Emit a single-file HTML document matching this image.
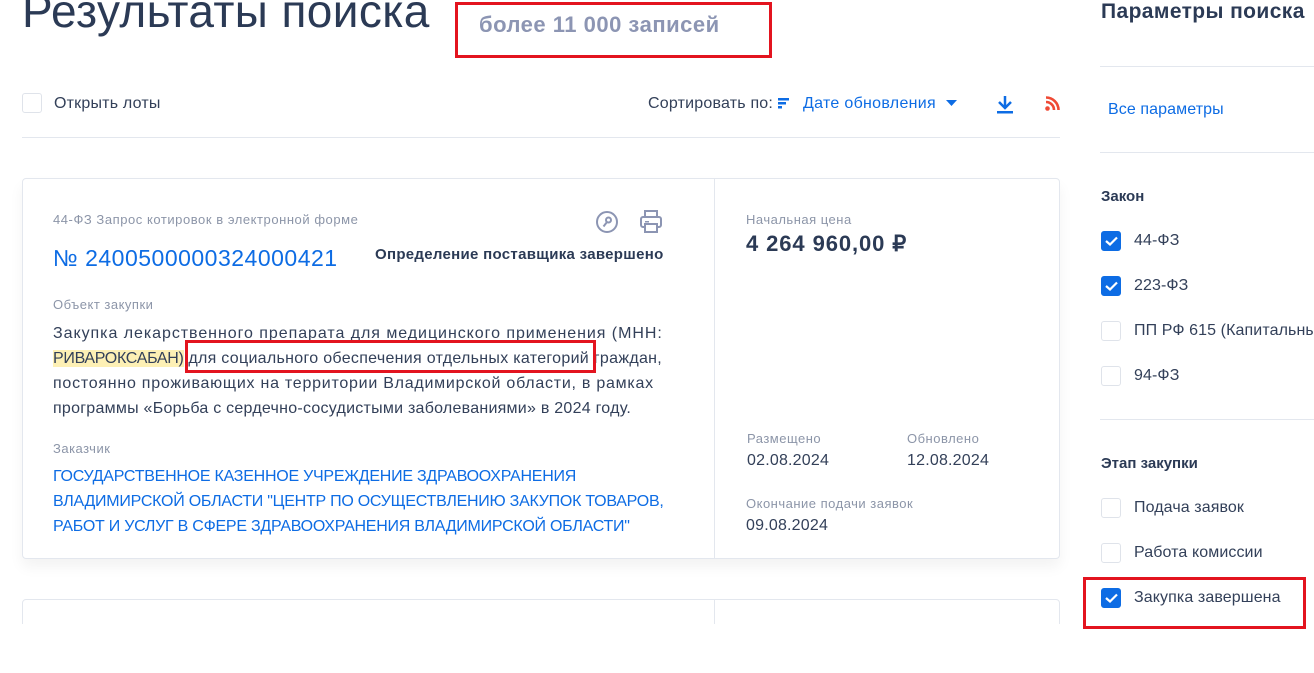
<!DOCTYPE html>
<html><head><meta charset="utf-8"><style>
*{margin:0;padding:0;box-sizing:border-box}
body{width:1314px;height:673px;overflow:hidden;background:#fff;font-family:"Liberation Sans",sans-serif;color:#334059;position:relative}
.a{position:absolute;white-space:nowrap}
.cb{position:absolute;width:20px;height:20px;border:1px solid #dfe3ea;border-radius:3px;background:#fff}
.cb.on{background:#0d6ce4;border-color:#0d6ce4}
.cb.on svg{position:absolute;left:3px;top:4px}
.red{position:absolute;border:3px solid #e3141f}
.lbl{font-size:13px;color:#8c95a8;letter-spacing:0.2px}
.t16{font-size:16px;letter-spacing:0.2px}
.body{font-size:16px;line-height:25px}
.hr{position:absolute;height:1px;background:#e3e7ee}
.s{font-size:16px;letter-spacing:0.1px}
</style></head><body>
<div class="a" style="left:22px;top:-16px;font-size:46px;color:#2b3a55;letter-spacing:0.4px">Результаты поиска</div>
<div class="a" style="left:479px;top:12px;font-size:22px;font-weight:bold;color:#8c95b3;letter-spacing:0.5px">более 11 000 записей</div>
<div class="red" style="left:455px;top:2px;width:317px;height:56px"></div>

<div class="cb" style="left:22px;top:93px"></div>
<div class="a t16" style="left:54px;top:95px;color:#334059">Открыть лоты</div>
<div class="a t16" style="left:648px;top:95px;color:#334059">Сортировать по:</div>
<svg class="a" style="left:778px;top:98px" width="12" height="11"><rect x="0" y="0" width="11" height="2.5" fill="#0d6ce4"/><rect x="0" y="4" width="8" height="2.5" fill="#0d6ce4"/><rect x="0" y="8" width="4" height="2.5" fill="#0d6ce4"/></svg>
<div class="a t16" style="left:803px;top:95px;color:#0d6ce4;letter-spacing:0.3px">Дате обновления</div>
<svg class="a" style="left:946px;top:100px" width="11" height="7"><path d="M0 0H11L5.5 6Z" fill="#0d6ce4"/></svg>
<svg class="a" style="left:996px;top:95px" width="18" height="19"><path d="M9 1V13M3 7L9 13L15 7" stroke="#0d6ce4" stroke-width="2.5" fill="none"/><rect x="1" y="16" width="16" height="2.5" fill="#0d6ce4"/></svg>
<svg class="a" style="left:1045px;top:96px" width="15" height="15"><circle cx="2.5" cy="12.5" r="2.3" fill="#ef4a35"/><path d="M1 6A8 8 0 0 1 9 14M1 1.5A12.5 12.5 0 0 1 13.5 14" stroke="#ef4a35" stroke-width="2.6" fill="none"/></svg>
<div class="hr" style="left:22px;top:137px;width:1038px"></div>

<div style="position:absolute;left:22px;top:178px;width:1038px;height:381px;border:1px solid #e3e7ee;border-radius:4px;box-shadow:0 8px 14px rgba(0,0,0,0.05)"></div>
<div style="position:absolute;left:714px;top:179px;width:1px;height:379px;background:#e3e7ee"></div>
<div class="a lbl" style="left:53px;top:212px;letter-spacing:0.55px">44-ФЗ Запрос котировок в электронной форме</div>
<svg class="a" style="left:595px;top:210px" width="24" height="24"><circle cx="12" cy="12" r="10" stroke="#8c95b3" stroke-width="2" fill="none"/><circle cx="13.5" cy="10" r="2.5" stroke="#8c95b3" stroke-width="2" fill="none"/><path d="M12 12L8.5 16.5" stroke="#8c95b3" stroke-width="2"/></svg>
<svg class="a" style="left:640px;top:210px" width="22" height="24"><rect x="5" y="1" width="12" height="6" stroke="#8c95b3" stroke-width="2" fill="none"/><rect x="1" y="7" width="20" height="10" rx="2" stroke="#8c95b3" stroke-width="2" fill="none"/><rect x="5" y="14" width="12" height="8" stroke="#8c95b3" stroke-width="2" fill="#fff"/><rect x="5" y="11" width="4" height="1.5" fill="#8c95b3"/></svg>
<div class="a" style="left:53px;top:245px;font-size:23px;color:#0d6ce4;font-weight:500;letter-spacing:0.5px">№ 2400500000324000421</div>
<div class="a" style="left:375px;top:246px;font-size:15px;font-weight:bold;color:#2b3a55;letter-spacing:0.3px">Определение поставщика завершено</div>
<div class="a lbl" style="left:53px;top:297px;letter-spacing:0.5px">Объект закупки</div>
<div class="a body" style="left:53px;top:321px;letter-spacing:0.95px">Закупка лекарственного препарата для медицинского применения (МНН:</div>
<div class="a body" style="left:53px;top:346px;letter-spacing:0.3px"><span style="background:#fdf0b5;letter-spacing:-0.3px">РИВАРОКСАБАН)</span> для социального обеспечения отдельных категорий граждан,</div>
<div class="a body" style="left:53px;top:371px;letter-spacing:0.75px">постоянно проживающих на территории Владимирской области, в рамках</div>
<div class="a body" style="left:53px;top:396px;letter-spacing:0.25px">программы «Борьба с сердечно-сосудистыми заболеваниями» в 2024 году.</div>
<div class="red" style="left:185px;top:340px;width:411px;height:33px"></div>
<div class="a lbl" style="left:53px;top:441px;letter-spacing:0.5px">Заказчик</div>
<div class="a t16" style="left:53px;top:464px;line-height:25px;color:#0d6ce4;letter-spacing:-0.25px">ГОСУДАРСТВЕННОЕ КАЗЕННОЕ УЧРЕЖДЕНИЕ ЗДРАВООХРАНЕНИЯ<br>ВЛАДИМИРСКОЙ ОБЛАСТИ "ЦЕНТР ПО ОСУЩЕСТВЛЕНИЮ ЗАКУПОК ТОВАРОВ,<br>РАБОТ И УСЛУГ В СФЕРЕ ЗДРАВООХРАНЕНИЯ ВЛАДИМИРСКОЙ ОБЛАСТИ"</div>

<div class="a lbl" style="left:746px;top:212px;letter-spacing:0.5px">Начальная цена</div>
<div class="a" style="left:746px;top:231px;font-size:22px;font-weight:bold;color:#2b3a55;letter-spacing:0.9px">4 264 960,00 ₽</div>
<div class="a lbl" style="left:747px;top:431px;letter-spacing:0.5px">Размещено</div>
<div class="a t16" style="left:747px;top:452px">02.08.2024</div>
<div class="a lbl" style="left:907px;top:431px;letter-spacing:0.5px">Обновлено</div>
<div class="a t16" style="left:907px;top:452px">12.08.2024</div>
<div class="a lbl" style="left:746px;top:496px;letter-spacing:0.5px">Окончание подачи заявок</div>
<div class="a t16" style="left:746px;top:517px">09.08.2024</div>

<div style="position:absolute;left:22px;top:599px;width:1038px;height:60px;border:1px solid #e3e7ee;border-radius:4px"></div>
<div style="position:absolute;left:714px;top:600px;width:1px;height:24px;background:#e3e7ee"></div>
<div style="position:absolute;left:0;top:624px;width:1314px;height:49px;background:#fff"></div>

<div class="a" style="left:1101px;top:0px;font-size:21px;font-weight:bold;color:#2b3a55;letter-spacing:0.4px">Параметры поиска</div>
<div class="hr" style="left:1100px;top:66px;width:214px"></div>
<div class="a s" style="left:1108px;top:101px;color:#0d6ce4">Все параметры</div>
<div class="hr" style="left:1100px;top:152px;width:214px"></div>
<div class="a" style="left:1101px;top:188px;font-size:15px;font-weight:bold;color:#2b3a55">Закон</div>
<div class="cb on" style="left:1101px;top:231px"><svg width="13" height="10"><path d="M1 5L5 8.5L12 1.5" stroke="#fff" stroke-width="2.2" fill="none"/></svg></div>
<div class="a s" style="left:1134px;top:232px">44-ФЗ</div>
<div class="cb on" style="left:1101px;top:276px"><svg width="13" height="10"><path d="M1 5L5 8.5L12 1.5" stroke="#fff" stroke-width="2.2" fill="none"/></svg></div>
<div class="a s" style="left:1134px;top:277px">223-ФЗ</div>
<div class="cb" style="left:1101px;top:321px"></div>
<div class="a s" style="left:1134px;top:322px">ПП РФ 615 (Капитальный</div>
<div class="cb" style="left:1101px;top:366px"></div>
<div class="a s" style="left:1134px;top:367px">94-ФЗ</div>
<div class="hr" style="left:1100px;top:419px;width:214px"></div>
<div class="a" style="left:1101px;top:455px;font-size:15px;font-weight:bold;color:#2b3a55">Этап закупки</div>
<div class="cb" style="left:1101px;top:498px"></div>
<div class="a s" style="left:1134px;top:499px">Подача заявок</div>
<div class="cb" style="left:1101px;top:543px"></div>
<div class="a s" style="left:1134px;top:544px">Работа комиссии</div>
<div class="cb on" style="left:1101px;top:588px"><svg width="13" height="10"><path d="M1 5L5 8.5L12 1.5" stroke="#fff" stroke-width="2.2" fill="none"/></svg></div>
<div class="a s" style="left:1134px;top:589px">Закупка завершена</div>
<div class="red" style="left:1083px;top:577px;width:223px;height:52px"></div>
</body></html>
